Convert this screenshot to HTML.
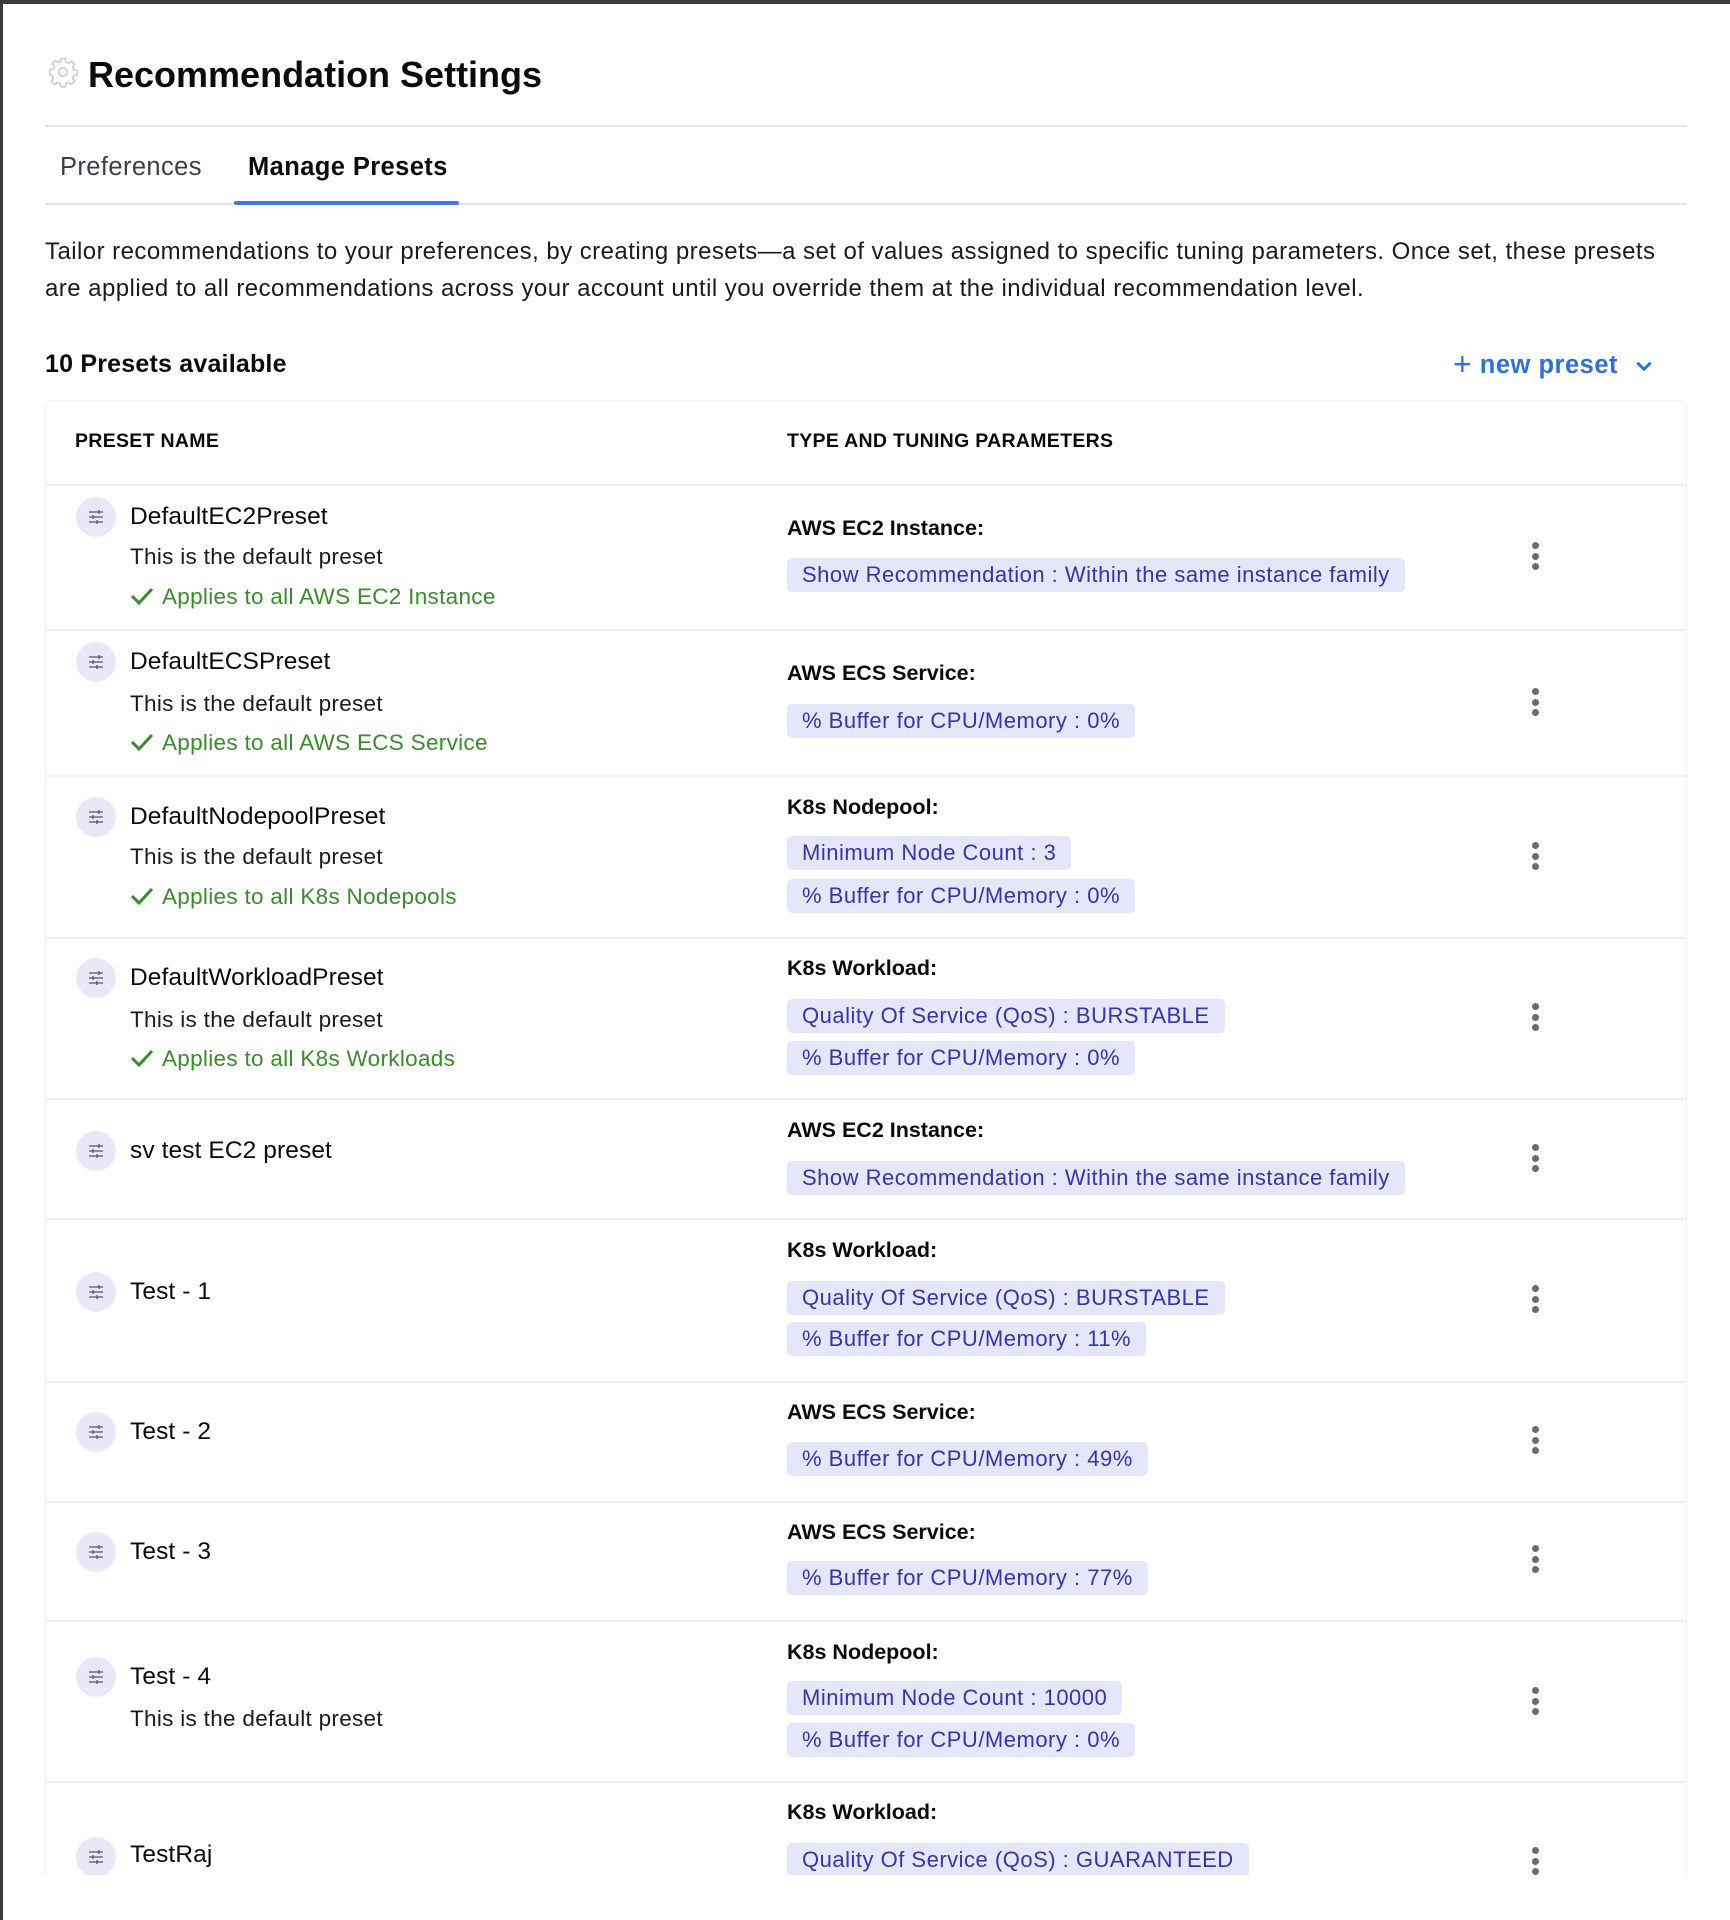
<!DOCTYPE html>
<html><head><meta charset="utf-8"><style>
*{margin:0;padding:0;box-sizing:border-box}
html,body{width:1730px;height:1920px;background:#fff;overflow:hidden}
body{font-family:"Liberation Sans",sans-serif;color:#0b0b0d;position:relative}
.topbar{position:absolute;left:0;top:0;width:1730px;height:4px;background:#3b3b3f}
.leftbar{position:absolute;left:0;top:0;width:3px;height:1920px;background:#3b3b3f}
.clip{position:absolute;left:3px;top:4px;width:1727px;height:1871px;overflow:hidden}
.a{position:absolute;white-space:nowrap;line-height:30px}
.title{left:85px;top:51px;font-size:36px;font-weight:bold;line-height:40px}
.hr{position:absolute;left:42px;width:1642px;height:2px;background:#e2e2ea}
.tab{font-size:25.5px;top:148px;letter-spacing:.4px}
.p{left:42px;font-size:24px;color:#1b1b1f;letter-spacing:.45px}
.h2{left:42px;top:345px;font-size:25px;font-weight:bold;letter-spacing:.2px}
.np{left:1450px;top:345px;font-size:25.5px;font-weight:bold;color:#2f72d2;letter-spacing:.5px}
.table{position:absolute;left:42px;top:396px;width:1642px;height:1600px;border:1.5px solid #eef0f4;border-radius:6px}
.rl{position:absolute;left:43px;width:1640px;height:1.5px;background:#eef0f4}
.th{font-size:19.5px;font-weight:bold;letter-spacing:.3px}
.ic{position:absolute;left:73px;width:40px;height:40px;border-radius:50%;background:#e8e8f8}
.ic svg{position:absolute;left:10px;top:10px}
.nm{left:127px;font-size:24.5px;letter-spacing:.1px}
.ds{left:127px;font-size:22.5px;color:#1b1b1f;letter-spacing:.3px}
.ap{left:127px;font-size:22.5px;color:#3c8a2e;letter-spacing:.3px}
.ap svg{vertical-align:-2px;margin-right:8px}
.lb{left:784px;font-size:21.5px;font-weight:bold}
.bd{position:absolute;left:784px;height:34px;line-height:34px;padding:0 15px;background:#e6e6fa;color:#3634a8;font-size:22px;border-radius:5px;white-space:nowrap;letter-spacing:.5px}
.kb{position:absolute;left:1529px;width:7px}
.kb i{display:block;width:7px;height:7px;border-radius:50%;background:#6b6b78;margin-bottom:3.5px}
</style></head><body>
<div class="topbar"></div><div class="leftbar"></div>
<div class="clip">
<svg style="position:absolute;left:44px;top:52px" width="32" height="32" viewBox="0 0 24 24" fill="none" stroke="#cfcfd3" stroke-width="1.3"><circle cx="12" cy="12" r="3.2"/><path d="M10.3 2h3.4l.5 2.6 1.9.8 2.2-1.5 2.4 2.4-1.5 2.2.8 1.9 2.6.5v3.4l-2.6.5-.8 1.9 1.5 2.2-2.4 2.4-2.2-1.5-1.9.8-.5 2.6h-3.4l-.5-2.6-1.9-.8-2.2 1.5-2.4-2.4 1.5-2.2-.8-1.9L2 13.7v-3.4l2.6-.5.8-1.9-1.5-2.2 2.4-2.4 2.2 1.5 1.9-.8z"/></svg>
<div class="a title">Recommendation Settings</div>
<div class="hr" style="top:121px"></div>
<div class="a tab" style="left:57px;color:#3d3d48">Preferences</div>
<div class="a tab" style="left:245px;font-weight:bold">Manage Presets</div>
<div class="hr" style="top:199px"></div>
<div style="position:absolute;left:231px;top:197px;width:225px;height:4px;background:#3b7de0;border-radius:2px"></div>
<div class="a p" style="top:233px">Tailor recommendations to your preferences, by creating presets—a set of values assigned to specific tuning parameters. Once set, these presets</div>
<div class="a p" style="top:270px">are applied to all recommendations across your account until you override them at the individual recommendation level.</div>
<div class="a h2">10 Presets available</div>
<div class="a np"><span style="font-size:32px;font-weight:normal;vertical-align:-2px">+</span> new preset <svg width="20" height="14" viewBox="0 0 18 12" style="margin-left:8px"><path d="M3 3l6 6 6-6" fill="none" stroke="#2f72d2" stroke-width="2.6"/></svg></div>
<div class="table"></div>
<div class="a th" style="left:72px;top:422px">PRESET NAME</div>
<div class="a th" style="left:784px;top:422px">TYPE AND TUNING PARAMETERS</div>

<div class="rl" style="top:480px"></div>
<div class="rl" style="top:625px"></div>
<div class="rl" style="top:771px"></div>
<div class="rl" style="top:933px"></div>
<div class="rl" style="top:1094px"></div>
<div class="rl" style="top:1214px"></div>
<div class="rl" style="top:1377px"></div>
<div class="rl" style="top:1497px"></div>
<div class="rl" style="top:1616px"></div>
<div class="rl" style="top:1777px"></div>

<!-- row1 -->
<div class="ic" style="top:493px"><svg width="20" height="20" viewBox="0 0 20 20" stroke="#55556a" stroke-width="1.3"><path d="M3 5h14M3 10h14M3 15h14M13 3v4M7 8v4M11 13v4"/></svg></div>
<div class="a nm" style="top:498px">DefaultEC2Preset</div>
<div class="a ds" style="top:538px">This is the default preset</div>
<div class="a ap" style="top:578px"><svg width="24" height="20" viewBox="0 0 24 20"><path d="M2 10l7 7L22 3" fill="none" stroke="#3c8a2e" stroke-width="3"/></svg>Applies to all AWS EC2 Instance</div>
<div class="a lb" style="top:509px">AWS EC2 Instance:</div>
<div class="bd" style="top:554px">Show Recommendation : Within the same instance family</div>
<div class="kb" style="top:538px"><i></i><i></i><i></i></div>
<!-- row2 -->
<div class="ic" style="top:638px"><svg width="20" height="20" viewBox="0 0 20 20" stroke="#55556a" stroke-width="1.3"><path d="M3 5h14M3 10h14M3 15h14M13 3v4M7 8v4M11 13v4"/></svg></div>
<div class="a nm" style="top:643px">DefaultECSPreset</div>
<div class="a ds" style="top:685px">This is the default preset</div>
<div class="a ap" style="top:724px"><svg width="24" height="20" viewBox="0 0 24 20"><path d="M2 10l7 7L22 3" fill="none" stroke="#3c8a2e" stroke-width="3"/></svg>Applies to all AWS ECS Service</div>
<div class="a lb" style="top:654px">AWS ECS Service:</div>
<div class="bd" style="top:700px">% Buffer for CPU/Memory : 0%</div>
<div class="kb" style="top:684px"><i></i><i></i><i></i></div>
<!-- row3 -->
<div class="ic" style="top:793px"><svg width="20" height="20" viewBox="0 0 20 20" stroke="#55556a" stroke-width="1.3"><path d="M3 5h14M3 10h14M3 15h14M13 3v4M7 8v4M11 13v4"/></svg></div>
<div class="a nm" style="top:798px">DefaultNodepoolPreset</div>
<div class="a ds" style="top:838px">This is the default preset</div>
<div class="a ap" style="top:878px"><svg width="24" height="20" viewBox="0 0 24 20"><path d="M2 10l7 7L22 3" fill="none" stroke="#3c8a2e" stroke-width="3"/></svg>Applies to all K8s Nodepools</div>
<div class="a lb" style="top:788px">K8s Nodepool:</div>
<div class="bd" style="top:832px">Minimum Node Count : 3</div>
<div class="bd" style="top:875px">% Buffer for CPU/Memory : 0%</div>
<div class="kb" style="top:838px"><i></i><i></i><i></i></div>
<!-- row4 -->
<div class="ic" style="top:954px"><svg width="20" height="20" viewBox="0 0 20 20" stroke="#55556a" stroke-width="1.3"><path d="M3 5h14M3 10h14M3 15h14M13 3v4M7 8v4M11 13v4"/></svg></div>
<div class="a nm" style="top:959px">DefaultWorkloadPreset</div>
<div class="a ds" style="top:1001px">This is the default preset</div>
<div class="a ap" style="top:1040px"><svg width="24" height="20" viewBox="0 0 24 20"><path d="M2 10l7 7L22 3" fill="none" stroke="#3c8a2e" stroke-width="3"/></svg>Applies to all K8s Workloads</div>
<div class="a lb" style="top:949px">K8s Workload:</div>
<div class="bd" style="top:995px">Quality Of Service (QoS) : BURSTABLE</div>
<div class="bd" style="top:1037px">% Buffer for CPU/Memory : 0%</div>
<div class="kb" style="top:999px"><i></i><i></i><i></i></div>
<!-- row5 -->
<div class="ic" style="top:1127px"><svg width="20" height="20" viewBox="0 0 20 20" stroke="#55556a" stroke-width="1.3"><path d="M3 5h14M3 10h14M3 15h14M13 3v4M7 8v4M11 13v4"/></svg></div>
<div class="a nm" style="top:1132px">sv test EC2 preset</div>
<div class="a lb" style="top:1111px">AWS EC2 Instance:</div>
<div class="bd" style="top:1157px">Show Recommendation : Within the same instance family</div>
<div class="kb" style="top:1140px"><i></i><i></i><i></i></div>
<!-- row6 -->
<div class="ic" style="top:1268px"><svg width="20" height="20" viewBox="0 0 20 20" stroke="#55556a" stroke-width="1.3"><path d="M3 5h14M3 10h14M3 15h14M13 3v4M7 8v4M11 13v4"/></svg></div>
<div class="a nm" style="top:1273px">Test - 1</div>
<div class="a lb" style="top:1231px">K8s Workload:</div>
<div class="bd" style="top:1277px">Quality Of Service (QoS) : BURSTABLE</div>
<div class="bd" style="top:1318px">% Buffer for CPU/Memory : 11%</div>
<div class="kb" style="top:1281px"><i></i><i></i><i></i></div>
<!-- row7 -->
<div class="ic" style="top:1408px"><svg width="20" height="20" viewBox="0 0 20 20" stroke="#55556a" stroke-width="1.3"><path d="M3 5h14M3 10h14M3 15h14M13 3v4M7 8v4M11 13v4"/></svg></div>
<div class="a nm" style="top:1413px">Test - 2</div>
<div class="a lb" style="top:1393px">AWS ECS Service:</div>
<div class="bd" style="top:1438px">% Buffer for CPU/Memory : 49%</div>
<div class="kb" style="top:1422px"><i></i><i></i><i></i></div>
<!-- row8 -->
<div class="ic" style="top:1528px"><svg width="20" height="20" viewBox="0 0 20 20" stroke="#55556a" stroke-width="1.3"><path d="M3 5h14M3 10h14M3 15h14M13 3v4M7 8v4M11 13v4"/></svg></div>
<div class="a nm" style="top:1533px">Test - 3</div>
<div class="a lb" style="top:1513px">AWS ECS Service:</div>
<div class="bd" style="top:1557px">% Buffer for CPU/Memory : 77%</div>
<div class="kb" style="top:1541px"><i></i><i></i><i></i></div>
<!-- row9 -->
<div class="ic" style="top:1653px"><svg width="20" height="20" viewBox="0 0 20 20" stroke="#55556a" stroke-width="1.3"><path d="M3 5h14M3 10h14M3 15h14M13 3v4M7 8v4M11 13v4"/></svg></div>
<div class="a nm" style="top:1658px">Test - 4</div>
<div class="a ds" style="top:1700px">This is the default preset</div>
<div class="a lb" style="top:1633px">K8s Nodepool:</div>
<div class="bd" style="top:1677px">Minimum Node Count : 10000</div>
<div class="bd" style="top:1719px">% Buffer for CPU/Memory : 0%</div>
<div class="kb" style="top:1683px"><i></i><i></i><i></i></div>
<!-- row10 -->
<div class="ic" style="top:1833px"><svg width="20" height="20" viewBox="0 0 20 20" stroke="#55556a" stroke-width="1.3"><path d="M3 5h14M3 10h14M3 15h14M13 3v4M7 8v4M11 13v4"/></svg></div>
<div class="a nm" style="top:1836px">TestRaj</div>
<div class="a lb" style="top:1793px">K8s Workload:</div>
<div class="bd" style="top:1839px">Quality Of Service (QoS) : GUARANTEED</div>
<div class="kb" style="top:1843px"><i></i><i></i><i></i></div>
</div>
</body></html>
